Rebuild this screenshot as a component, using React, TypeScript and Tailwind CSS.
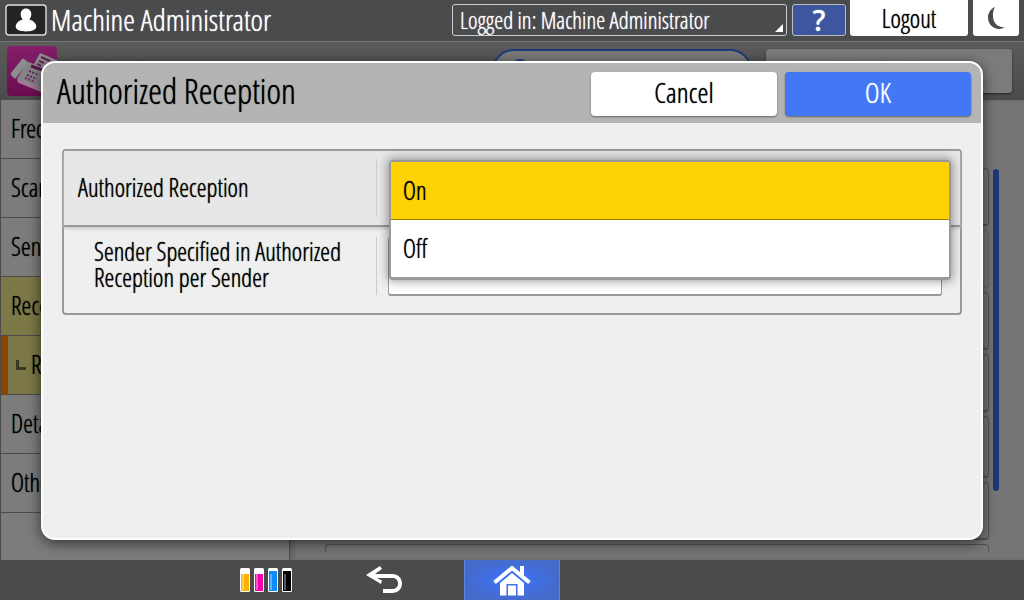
import React, { useState } from 'react';

interface MenuItem {
  label: string;
  active?: boolean;
  child?: boolean;
}

const menuItems: MenuItem[] = [
  { label: 'Frequent Settings' },
  { label: 'Scan Settings' },
  { label: 'Send Settings' },
  { label: 'Reception Settings', active: true },
  { label: 'Reception Files', active: true, child: true },
  { label: 'Detailed Initial Settings' },
  { label: 'Others' },
];

const cards = ['h-[58px]', 'h-[58px] opacity-40', 'h-[58px]', 'h-[58px]', 'h-[62px]', 'h-[58px]', 'h-[58px]'];

const toners = ['#ffb200', '#f500a8', '#0a8cff', '#000000'];

const options = ['On', 'Off'];

const UserIcon = () => (
  <svg width="42" height="32" viewBox="0 0 42 32">
    <rect x="1" y="1" width="40" height="30" rx="3" fill="#212423" stroke="#dedede" strokeWidth="1.4" />
    <path d="M21 4.500c3.300 0 5.300 2.500 5.300 5.800 0 2-.8 4-2.100 5.200 4 .8 7.100 3.800 7.100 7.300 0 3-4.500 4.700-10.300 4.700S10.700 25.800 10.700 22.800c0-3.500 3.100-6.500 7.100-7.300-1.300-1.200-2.100-3.200-2.100-5.200 0-3.300 2-5.800 5.300-5.800z" fill="#fff" />
  </svg>
);

const MoonIcon = () => (
  <svg width="18" height="24" viewBox="0 0 18 24">
    <path d="M8 1C3.500 3 1 7 1 11.500 1 18 6 23 12 23c2 0 4-.5 5.500-1.700C11 21.500 6.500 17.500 6 11 5.700 7 6.500 3.500 8 1z" fill="#4a4a4a" />
  </svg>
);

const FaxIcon = () => (
  <svg width="50" height="50" viewBox="0 0 50 50">
    <defs>
      <linearGradient id="fax" x1="0" y1="0" x2="0" y2="1">
        <stop offset="0" stopColor="#851e6a" />
        <stop offset="1" stopColor="#6c0c4e" />
      </linearGradient>
    </defs>
    <rect width="50" height="50" rx="4" fill="url(#fax)" />
    <path d="M33 7l17 7v18l-24-12z" fill="#8d8d8d" />
    <path d="M34 11l9 4M32 15l5 2M39 18l5 2M30 18l4 2" stroke="#6b2057" strokeWidth="2" />
    <path d="M19 17q1-2 3-1l26 11q2 1 1 3L37 44 10 33z" fill="#858585" />
    <path d="M10 33l27 9v4q-1 1-3 0L12 37q-2-1-2-4z" fill="#a07b96" />
    <path d="M15 13q1-1 2 0l3 2q1 1 0 2L9 32q-1 1-2 0l-2-2q-2-1-1-3z" fill="#8d8d8d" />
    <path d="M24 20l14 5" stroke="#5c1748" strokeWidth="3" />
    <path d="M22 25l10 4M20 29l10 4M18 32l10 4" stroke="#6b2057" strokeWidth="2" strokeDasharray="2 1.500" />
  </svg>
);

const BackIcon = () => (
  <svg width="36" height="28" viewBox="0 0 36 28">
    <path d="M0 9L14 0l2 3-7 5h17c6 0 10 4 10 9.500S32 27 26 27h-9v-4h9c4 0 6-2 6-5.500S30 12 26 12H11l5 2.500-1 3.500z" fill="#fff" />
  </svg>
);

const HomeIcon = () => (
  <svg width="38" height="31" viewBox="0 0 38 31">
    <path d="M1.500 17.500L19 3l17.500 14.500" fill="none" stroke="#fff" strokeWidth="4" />
    <path d="M27 1h4v10l-4-3.500z" fill="#fff" />
    <path d="M19 8l12 10v12.500h-6.500V19h-11v11.500H7V18z" fill="#fff" />
    <path d="M15 20.500h8v10h-8z" fill="#fff" />
  </svg>
);

const TonerIcon = () => (
  <svg width="52" height="24" viewBox="0 0 52 24">
    {toners.map((color, i) => (
      <g key={color} transform={`translate(${i * 14} 0)`}>
        <rect width="10" height="24" rx="1.500" fill="#fff" />
        <path d={['M1 6h8v17H1z', 'M1 6h8v17H1z', 'M1 3h8v20H1z', 'M1 3h8v20H1z'][i]} fill={color} />
        <path d="M2 6h2v16H2z" fill="#fff" opacity="0.35" />
      </g>
    ))}
  </svg>
);

const TopBar = () => (
  <header className="flex h-[42px] shrink-0 items-start border-b border-[#777] bg-[#4a4b4c] px-[5px]">
    <div className="flex flex-1 items-center gap-1 pt-1">
      <UserIcon />
      <span className="text-[30px] leading-8 text-white">Machine Administrator</span>
    </div>
    <button className="relative mt-1 h-8 w-[335px] rounded-[3px] border border-[#ccc] pl-[7px] text-left text-[23px] leading-[28px] text-white">
      Logged in: Machine Administrator
      <svg className="absolute bottom-[3px] right-[3px]" width="8" height="8" viewBox="0 0 8 8">
        <path d="M8 0v8H0z" fill="#fff" />
      </svg>
    </button>
    <button className="ml-[5px] mt-1 h-8 w-[54px] rounded-[3px] border border-[#bbb] bg-[#3c579d] font-['Noto_Sans',sans-serif] text-[28px] font-medium leading-[28px] text-white">?</button>
    <button className="ml-1 h-9 w-[118px] rounded-b-[3px] bg-white text-[25px] leading-9 text-black">Logout</button>
    <button aria-label="Sleep" className="ml-[5px] flex h-9 w-[46px] items-center justify-center rounded-b-[3px] bg-white">
      <MoonIcon />
    </button>
  </header>
);

const SettingsPage = () => (
  <div className="flex min-h-0 flex-1 flex-col">
    <div className="flex h-[58px] shrink-0 items-start bg-linear-to-b from-[#5b5b5b] to-[#4b4b4b] pl-[7px] pr-3">
      <div className="flex flex-1 items-center gap-1 pt-1">
        <FaxIcon />
        <h1 className="text-[30px] leading-10 text-black">Fax Settings</h1>
      </div>
      <button aria-label="Search" className="mt-[7px] flex h-11 w-[260px] rounded-full border-2 border-[#1f3a7d] bg-[#7b7b7b] pl-[18px] pt-2">
        <svg width="18" height="18" viewBox="0 0 18 18">
          <circle cx="8" cy="8" r="6" fill="none" stroke="#1f3a7d" strokeWidth="4" />
        </svg>
      </button>
      <button className="ml-[14px] mt-[7px] h-11 w-[246px] rounded-[3px] bg-[#7b7b7b] text-[25px] text-black shadow-[0_1px_2px_#222]">User Settings</button>
    </div>
    <div className="flex min-h-0 flex-1">
      <nav className="w-[290px] shrink-0 border-x border-[#4b4b4b] bg-[#7c7c7c]">
        {menuItems.map((item) => (
          <a
            key={item.label}
            href="#"
            className={`flex h-[59px] items-center border-b border-[#4b4b4b] text-[25px] text-black ${item.active ? 'bg-[#7d7848]' : ''} ${item.child ? 'border-l-[7px] border-l-[#8a4600] pl-2' : 'pl-[10px]'}`}
          >
            {item.child && (
              <svg className="mr-[5px]" width="10" height="10" viewBox="0 0 10 10">
                <path d="M1.500 0v8.500H10" fill="none" stroke="#383823" strokeWidth="3" />
              </svg>
            )}
            {item.label}
          </a>
        ))}
      </nav>
      <div className="flex min-w-0 flex-1 bg-[#767676] pb-2 pl-[35px] pr-[25px] pt-[68px] shadow-[inset_4px_0_4px_#666]">
        <div className="flex flex-1 flex-col gap-1 overflow-hidden">
          {cards.map((card, i) => (
            <div key={i} className={`shrink-0 rounded-[4px] border border-b-2 border-[#535353] ${card}`} />
          ))}
        </div>
        <div className="ml-1 mt-px h-[322px] w-[6px] rounded-full bg-[#1e3777]" />
      </div>
    </div>
  </div>
);

const AuthorizedReceptionDialog = () => {
  const [value, setValue] = useState('On');

  return (
    <div role="dialog" aria-label="Authorized Reception" className="absolute inset-x-[41px] bottom-[60px] top-[61px] flex flex-col overflow-hidden rounded-[14px] border-2 border-white bg-[#efefef] shadow-[0_3px_14px_rgba(0,0,0,0.6)]">
      <div className="flex h-[60px] shrink-0 items-end gap-2 bg-[#b4b4b4] pb-[7px] pl-[14px] pr-[10px]">
        <h2 className="flex-1 text-[35px] leading-[50px] text-black">Authorized Reception</h2>
        <button className="h-11 w-[186px] rounded-[4px] bg-white pb-1 text-[28px] leading-10 text-black shadow-[0_1px_2px_#666]">Cancel</button>
        <button className="h-11 w-[186px] rounded-[4px] bg-[#4378f4] pb-1 text-[28px] leading-10 text-white shadow-[0_1px_2px_#666]">OK</button>
      </div>
      <div className="mx-[19px] mt-[26px] rounded-[4px] border-2 border-[#999]">
        <div className="flex items-center border-b-2 border-[#999] bg-[#e7e7e7] py-2 shadow-[0_2px_3px_#ccc]">
          <label htmlFor="reception" className="w-[312px] shrink-0 pl-[14px] text-[25px] text-black">Authorized Reception</label>
          <div className="mr-[11px] h-[58px] w-px bg-[#ccc]" />
          <div className="relative mr-[18px] flex-1">
            <select id="reception" value={value} onChange={(e) => setValue(e.target.value)} className="h-[58px] w-full appearance-none px-3 text-[25px] text-black">
              {options.map((option) => (
                <option key={option}>{option}</option>
              ))}
            </select>
            <div role="listbox" aria-label="Authorized Reception" className="absolute -right-[9px] left-px top-px z-10 overflow-hidden rounded-[4px] border-2 border-b-[3px] border-[#999] bg-white shadow-[0_0_10px_2px_rgba(0,0,0,0.35)]">
              {options.map((option) => (
                <button
                  key={option}
                  role="option"
                  aria-selected={option === value}
                  onClick={() => setValue(option)}
                  className={`block w-full px-3 text-left text-[25px] text-black ${option === value ? 'h-[58px] border-b border-[#a08000] bg-[#ffd203]' : 'h-[57px] bg-white'}`}
                >
                  {option}
                </button>
              ))}
            </div>
          </div>
        </div>
        <div className="flex items-start pb-[17px] pt-[10px]">
          <label htmlFor="sender" className="w-[312px] shrink-0 pl-[30px] pr-5 pt-px text-[25px] leading-[26px] text-black">
            Sender Specified in Authorized Reception per Sender
          </label>
          <div className="mr-[11px] h-[58px] w-px bg-[#ccc]" />
          <div className="mr-[18px] flex-1">
            <select id="sender" className="block h-[59px] w-full appearance-none rounded-[3px] border border-b-2 border-[#999] bg-white px-3 text-[25px] text-black" />
          </div>
        </div>
      </div>
    </div>
  );
};

const BottomBar = () => (
  <footer className="relative z-10 flex h-10 shrink-0 items-stretch bg-[#4a4b4c]">
    <div className="flex flex-1 items-center justify-end gap-[74px] pr-[62px]">
      <button aria-label="Supplies">
        <TonerIcon />
      </button>
      <button aria-label="Back">
        <BackIcon />
      </button>
    </div>
    <button aria-label="Home" className="flex w-24 items-center justify-center border-x border-[#5a82e0] bg-radial from-[#3973ff] to-[#456bcb] to-70%">
      <HomeIcon />
    </button>
    <div className="flex-1 pl-[62px]" />
  </footer>
);

const App: React.FC = () => {
  return (
    <div className="relative flex h-screen flex-col overflow-hidden bg-[#767676] font-['Open_Sans_Condensed_Light','Roboto_Condensed','Liberation_Sans',sans-serif] [text-shadow:0_0_1px_currentColor] [&_button]:[text-shadow:0_0_1px_currentColor]">
      <TopBar />
      <SettingsPage />
      <BottomBar />
      <AuthorizedReceptionDialog />
    </div>
  );
};

export default App;
